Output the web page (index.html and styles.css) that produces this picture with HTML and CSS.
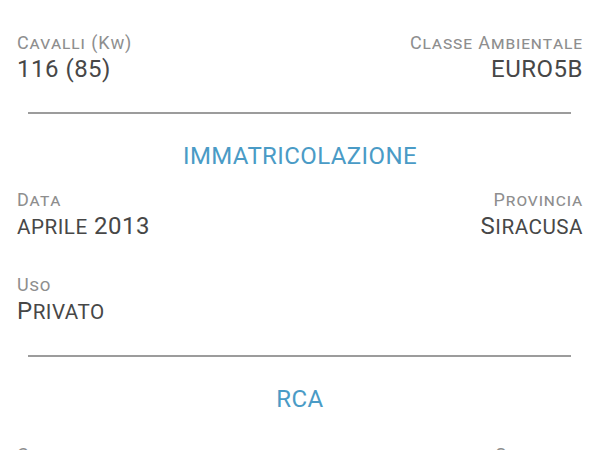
FILE: index.html
```html
<!DOCTYPE html>
<html>
<head>
<meta charset="utf-8">
<link rel="stylesheet" href="styles.css">
</head>
<body>
<div class="page">
  <div class="row">
    <div class="field">
      <div class="label">Cavalli (Kw)</div>
      <div class="value">116 (85)</div>
    </div>
    <div class="field right">
      <div class="label">Classe Ambientale</div>
      <div class="value">EURO5B</div>
    </div>
  </div>
  <div class="divider"></div>
  <div class="heading">IMMATRICOLAZIONE</div>
  <div class="row">
    <div class="field">
      <div class="label">Data</div>
      <div class="value"><span class="sm">aprile</span> 2013</div>
    </div>
    <div class="field right">
      <div class="label">Provincia</div>
      <div class="value">S<span class="sm">iracusa</span></div>
    </div>
  </div>
  <div class="row row-gap">
    <div class="field">
      <div class="label">Uso</div>
      <div class="value">P<span class="sm">rivato</span></div>
    </div>
  </div>
  <div class="divider"></div>
  <div class="heading">RCA</div>
  <div class="row tail">
    <div class="field">
      <div class="label">Compagnia</div>
    </div>
    <div class="field right">
      <div class="label">Scadenza</div>
    </div>
  </div>
</div>
</body>
</html>
```
FILE: styles.css
```css
html, body {
  margin: 0;
  padding: 0;
  background: #ffffff;
  overflow: hidden;
}
body {
  font-family: Roboto, "Liberation Sans", sans-serif;
}
.page {
  padding: 32px 17px 0 17px;
  display: flex;
  flex-direction: column;
}
.row {
  display: flex;
  justify-content: space-between;
}
.row-gap {
  margin-top: 32px;
}
.field {
  display: flex;
  flex-direction: column;
}
.field.right {
  align-items: flex-end;
}
.label {
  font-size: 18px;
  line-height: 22px;
  color: #8e8e8e;
  font-variant: small-caps;
  letter-spacing: 0.9px;
}
.value {
  font-size: 24px;
  line-height: 30px;
  color: #474747;
  letter-spacing: 0.5px;
}
.sm {
  text-transform: uppercase;
  font-size: 0.86em;
}
.divider {
  height: 2px;
  background: #9c9c9c;
  margin: 28px 12px 0 11px;
}
.heading {
  text-align: center;
  font-size: 24px;
  line-height: 28px;
  letter-spacing: 0.4px;
  color: #4a9bc6;
  margin: 28px 0 19px;
}
.tail {
  margin-top: 12px;
}
```
